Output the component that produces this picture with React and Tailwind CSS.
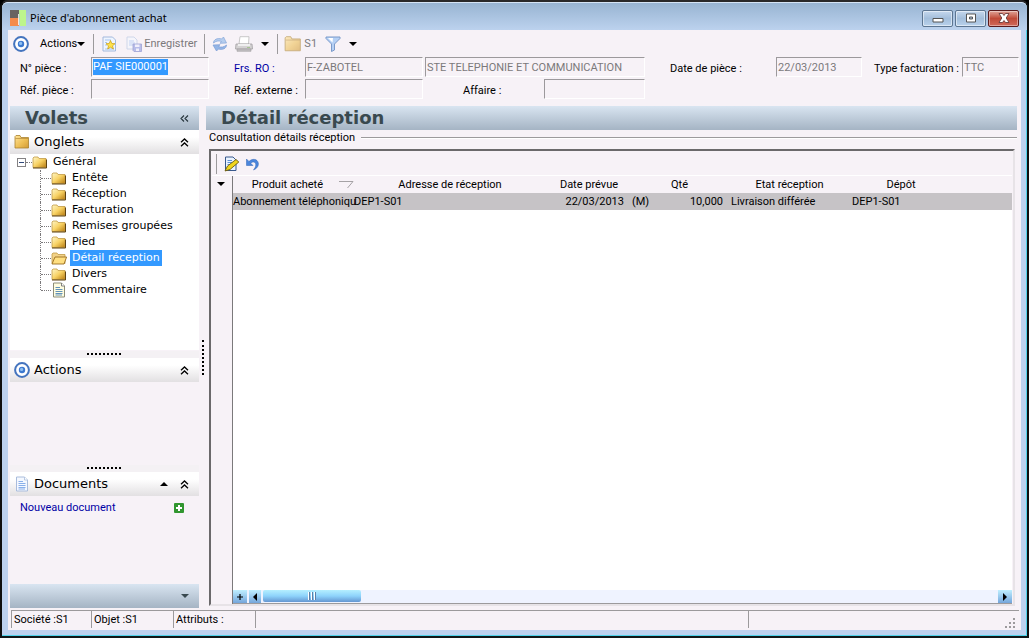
import React from "react";

const field =
  "h-5 shrink-0 border border-t-[#9c999c] border-l-[#9c999c] border-r-white border-b-white bg-[#f7f2f7] text-[#7b797b]";

function Target() {
  return (
    <svg viewBox="0 0 16 16" className="h-4 w-4 shrink-0">
      <circle cx="8" cy="8" r="6.9" fill="#fff" stroke="#4474be" strokeWidth="2" />
      <circle cx="8" cy="8" r="3.2" fill="#3c78cf" />
      <circle cx="7.600" cy="7.400" r="1.600" fill="#8fc0f2" />
    </svg>
  );
}

function Folder({ pale = false }) {
  return (
    <svg viewBox="0 0 16 16" className={pale ? "h-[18px] w-[18px] shrink-0 opacity-60" : "h-4 w-4 shrink-0"}>
      <defs>
        <linearGradient id="fold" x1="0" y1="0" x2="1" y2="1">
          <stop offset="0" stopColor="#ffe49a" />
          <stop offset="0.55" stopColor="#eebf55" />
          <stop offset="1" stopColor="#d29a35" />
        </linearGradient>
      </defs>
      <path d="M1 14V2.500L2 1.500H6L7 3.500H14.500V14Z" fill="url(#fold)" stroke="#a9822f" strokeWidth="0.8" />
      <path d="M1.500 4.500H14.200" fill="none" stroke="#a87e30" strokeWidth="0.6" />
    </svg>
  );
}

function TreeFolder({ open = false }) {
  return (
    <svg viewBox="0 0 16 13" className="h-[13px] w-4 shrink-0">
      <defs>
        <linearGradient id="tfold" x1="0" y1="0" x2="1" y2="1">
          <stop offset="0" stopColor="#fff7c8" />
          <stop offset="0.5" stopColor="#f8d264" />
          <stop offset="1" stopColor="#b87c10" />
        </linearGradient>
      </defs>
      <path d="M1 11.500V2L2 1H6L7 2.500H14V11.500Z" fill={open ? "#f2d287" : "url(#tfold)"} stroke="#c29a45" strokeWidth="0.8" />
      {open ? (
        <path d="M1 12L4 5H15.600L13 12Z" fill="#ffdf80" stroke="#9a6d20" strokeWidth="0.9" />
      ) : (
        <path d="M1 12H14.500V3.500" fill="none" stroke="#5f4311" strokeWidth="1" />
      )}
    </svg>
  );
}

function Page({ yellow = false }) {
  return (
    <svg viewBox="0 0 16 16" className="h-4 w-4 shrink-0">
      <path d="M2.500 1H10.500L13.500 4V15H2.500Z" fill={yellow ? "#fffde0" : "#f4f8ff"} stroke={yellow ? "#8c8c78" : "#a9bcdc"} />
      <path d="M10.500 1V4H13.500" fill="#fff" stroke={yellow ? "#666" : "#a9bcdc"} strokeWidth="0.8" />
      <path d="M4.500 5.500H9M4.500 7.500H11.500M4.500 9.500H11.500M4.500 11.500H11.500M4.500 13H11" stroke={yellow ? "#4f86b5" : "#7da7e8"} strokeWidth="0.9" />
    </svg>
  );
}

function Triangle({ up = false, color = "#000" }) {
  return (
    <svg viewBox="0 0 8 4" className="h-1 w-2 shrink-0">
      <path d={up ? "M0 4L4 0L8 4Z" : "M0 0H8L4 4Z"} fill={color} />
    </svg>
  );
}

function DoubleUp() {
  return (
    <svg viewBox="0 0 9 9" className="h-[9px] w-[9px]">
      <path d="M1 4.200L4.500 1L8 4.200M1 8.200L4.500 5L8 8.200" fill="none" stroke="#000" strokeWidth="1.300" />
    </svg>
  );
}

function Divider() {
  return <span className="h-5 w-px bg-[#9c9a9c]" />;
}

function Dots() {
  return (
    <div className="flex h-[7px] items-start justify-center bg-[#f4f1f4] pt-0.5">
      <svg viewBox="0 0 35 2" className="h-0.5 w-[35px]">
        <path d="M0 1H35" stroke="#000" strokeWidth="2" strokeDasharray="2 2" />
      </svg>
    </div>
  );
}

function SectionHead({ icon, title, extra }) {
  return (
    <div className="flex h-6 shrink-0 items-center bg-linear-to-b from-white from-30% to-[#e2e0e2] pl-1 pr-2.5">
      {icon}
      <h3 className="flex-1 pl-1 font-['DejaVu_Sans',sans-serif] text-[13px] leading-4">{title}</h3>
      {extra}
      <button aria-label={"Replier " + title} className="pl-3">
        <DoubleUp />
      </button>
    </div>
  );
}

function WindowButton({ label, close = false, children }) {
  return (
    <button
      aria-label={label}
      className={
        close
          ? "flex h-[17px] w-[31px] items-center justify-center rounded-xs border border-[#5a1a1c] bg-linear-to-b from-[#e0a398] via-[#c04a38] to-[#d0695a] inset-ring inset-ring-white/40"
          : "flex h-[17px] w-[31px] items-center justify-center rounded-xs border border-[#5c7591] bg-linear-to-b from-[#c5d8ed] via-[#a3bedb] to-[#b9d2ec] inset-ring inset-ring-white/50"
      }
    >
      <svg viewBox="0 0 14 12" className="h-3 w-3.5">
        {children}
      </svg>
    </button>
  );
}

function TitleBar() {
  return (
    <header className="flex h-7 shrink-0 items-center rounded-t-md border-t border-[#d5e4f5] bg-linear-to-b from-[#98b4d2] to-[#bcd2ee] pl-2 pr-2 pt-[3px]">
      <svg viewBox="0 0 16 16" className="h-4 w-4">
        <path d="M0 0H9V8H0Z" fill="#696361" />
        <path d="M0 8H9V16H0Z" fill="#f58a4b" />
        <path d="M9 0H16V16H10Z" fill="#bdf58c" />
        <path d="M8.500 4V15" stroke="#fff" strokeWidth="0.8" />
      </svg>
      <h1 className="flex-1 pl-1 font-['Noto_Sans',sans-serif] text-[11px] leading-4">Pièce d'abonnement achat</h1>
      <div className="flex gap-0.5">
        <WindowButton label="Réduire">
          <path d="M2 6.500H12V10H2Z" fill="#fff" stroke="#555" />
        </WindowButton>
        <WindowButton label="Agrandir">
          <path d="M2.500 2H11.500V10H2.500Z M5.500 5V7H8.500V5Z" fill="#fff" fillRule="evenodd" stroke="#555" />
        </WindowButton>
        <WindowButton label="Fermer" close>
          <path d="M2 1.500H5.500L7 3.500L8.500 1.500H12L9.200 6L12 10.500H8.500L7 8.500L5.500 10.500H2L4.800 6Z" fill="#fff" stroke="#5d3030" strokeWidth="0.8" />
        </WindowButton>
      </div>
    </header>
  );
}

function Toolbar() {
  return (
    <div className="flex h-[27px] shrink-0 items-center pl-[5px] text-[#7b797b]">
      <button aria-label="Cible"><Target /></button>
      <button className="ml-[11px] flex items-center text-black">
        Actions
        <Triangle />
      </button>
      <span className="mx-2 flex"><Divider /></span>
      <button aria-label="Nouveau">
        <svg viewBox="0 0 16 16" className="h-4 w-4">
          <path d="M1 1H10.500L13.500 4V15H1Z" fill="#eef5ff" stroke="#a3b9dc" />
          <path d="M3 4H9M3 13H12M3 6.500H5M3 9H5" stroke="#a6c3ec" />
          <path d="M8.500 4.500L9.800 7.500L13 7.700L10.500 9.800L11.400 13L8.500 11.200L5.700 13L6.500 9.800L4 7.700L7.200 7.500Z" fill="#ffe34a" stroke="#cfa51a" strokeWidth="0.8" />
        </svg>
      </button>
      <button className="ml-2 flex items-center gap-0.5">
        <svg viewBox="0 0 16 16" className="h-4 w-4 opacity-60">
          <path d="M1 1H8L11 4V13H1Z" fill="#f5f8ff" stroke="#b5c6e2" />
          <path d="M3 5H8M3 7H9M3 9H7" stroke="#9dbdf0" />
          <path d="M7 8H15.500V15.500H8L7 14.500Z" fill="#8f9be0" stroke="#6670bd" strokeWidth="0.8" />
          <path d="M9 8.500H13.500V11H9ZM10 12.500H13V15H10Z" fill="#eef" />
        </svg>
        Enregistrer
      </button>
      <span className="mx-[7px] flex"><Divider /></span>
      <button aria-label="Actualiser">
        <svg viewBox="0 0 16 16" className="h-4 w-4">
          <path d="M1.500 7C1.500 3.500 5.500 1.700 9.500 3L11.500 1L14.500 7L8 7.300L9.500 5.500C6.500 4.300 4 5 1.500 7Z" fill="#b5cdee" stroke="#84a5d8" strokeWidth="0.7" />
          <path d="M14.500 9C14.500 12.500 10.500 14.300 6.500 13L4.500 15L1 9L8 8.700L6.500 10.500C9.500 11.700 12 11 14.500 9Z" fill="#93b5e6" stroke="#7c9cd4" strokeWidth="0.7" />
        </svg>
      </button>
      <button aria-label="Imprimer" className="ml-[7px] flex items-center gap-2">
        <svg viewBox="0 0 18 16" className="h-4 w-[18px]">
          <path d="M4 8L5 0.700H14L13.500 8Z" fill="#fff" stroke="#bbb" strokeWidth="0.8" />
          <path d="M1 8H17L17.500 13H0.500Z" fill="#d4d2d3" stroke="#a2a0a2" strokeWidth="0.8" />
          <path d="M3 8H15V10H3Z" fill="#efefef" />
          <path d="M2 13H16V15.300H2Z" fill="#bfbdbf" stroke="#a2a0a2" strokeWidth="0.6" />
          <path d="M12 11.500H15" stroke="#a5c492" />
        </svg>
        <Triangle />
      </button>
      <span className="mr-1.5 ml-2 flex"><Divider /></span>
      <button className="flex items-center gap-0.5">
        <Folder pale />
        S1
      </button>
      <button aria-label="Filtrer" className="ml-2 flex items-center gap-2">
        <svg viewBox="0 0 16 16" className="h-4 w-4">
          <path d="M1 1H15V2.500L9.500 8V14L6.500 15.500V8L1 2.500Z" fill="#b5d0f5" stroke="#7b9ac9" />
          <path d="M3 2H8L7.500 6.500Z" fill="#fff" />
        </svg>
        <Triangle />
      </button>
    </div>
  );
}

function Field({ id, label, value = "", w, link = false, lw }) {
  return (
    <div className="flex shrink-0 items-center">
      <label htmlFor={id} className={"shrink-0 pt-1 whitespace-nowrap " + lw + (link ? " text-[#0000a5]" : "")}>{label}</label>
      <input id={id} readOnly defaultValue={value} className={field + " px-px " + w} />
    </div>
  );
}

function HeaderForm() {
  return (
    <form className="flex h-[49px] shrink-0 overflow-hidden pl-3">
      <div className="mr-[25px] flex flex-col gap-0.5">
        <div className="flex items-center">
          <label htmlFor="num" className="w-[71px] pt-1">N° pièce :</label>
          <div className={field + " flex w-[118px] items-center px-px"}>
            <input id="num" readOnly defaultValue="PAF SIE000001" className="h-4 bg-[#3399ff] text-white field-sizing-content" />
          </div>
        </div>
        <Field id="ref" label="Réf. pièce :" lw="w-[71px]" w="w-[118px]" />
      </div>
      <div className="mr-[25px] flex flex-col gap-0.5">
        <div className="flex gap-0.5">
          <Field id="frs" label="Frs. RO :" value="F-ZABOTEL" link lw="w-[71px]" w="w-[118px]" />
          <input aria-label="Nom du fournisseur" readOnly defaultValue="STE TELEPHONIE ET COMMUNICATION" className={field + " w-[220px] px-px"} />
        </div>
        <div className="flex justify-between">
          <Field id="ext" label="Réf. externe :" lw="w-[71px]" w="w-[118px]" />
          <Field id="aff" label="Affaire :" lw="w-[81px]" w="w-[101px]" />
        </div>
      </div>
      <div className="flex flex-1 items-start gap-3">
        <Field id="date" label="Date de pièce :" value="22/03/2013" lw="w-[106px]" w="w-[86px]" />
        <Field id="type" label="Type facturation :" value="TTC" lw="w-[88px]" w="w-[57px]" />
      </div>
    </form>
  );
}

const tabs = ["Entête", "Réception", "Facturation", "Remises groupées", "Pied", "Détail réception", "Divers", "Commentaire"];

function Tree() {
  return (
    <div className="h-[196px] shrink-0 bg-white pl-[7px] font-['DejaVu_Sans',sans-serif] text-[11px]">
      <div className="flex h-4 items-center">
        <button aria-label="Réduire Général" className="flex h-[9px] w-[9px] items-center justify-center border border-[#848284] bg-white">
          <span className="h-px w-[5px] bg-[#31497b]" />
        </button>
        <span className="w-1.5 border-t border-dotted border-[#7b797b]" />
        <TreeFolder />
        <span className="pl-[5px]">Général</span>
      </div>
      <ul className="pl-[23px]">
        {tabs.map((t, i) => (
          <li key={t} className="flex h-4">
            <span className={"border-l border-dotted border-[#7b797b] " + (i === tabs.length - 1 ? "h-2" : "h-4")} />
            <span className="mt-2 w-2.5 border-t border-dotted border-[#7b797b]" />
            <span className="flex w-[19px] items-center">
              {i === 7 ? <Page yellow /> : <TreeFolder open={i === 5} />}
            </span>
            <button className={"px-0.5 leading-4 " + (i === 5 ? "bg-[#3399ff] text-white" : "")}>{t}</button>
          </li>
        ))}
      </ul>
    </div>
  );
}

const heading = "font-['DejaVu_Sans',sans-serif] text-[18px] leading-6 font-bold text-[#39494f]";
const banner = "bg-linear-to-b from-[#d9e5f1] to-[#a5b4c4]";

function Sidebar() {
  return (
    <aside className="flex w-[189px] shrink-0 flex-col">
      <div className={"flex h-6 shrink-0 items-center justify-between pl-[15px] pr-2.5 " + banner}>
        <h2 className={heading}>Volets</h2>
        <button aria-label="Replier les volets">
          <svg viewBox="0 0 9 7" className="h-[7px] w-[9px]">
            <path d="M4 0.500L1 3.500L4 6.500M8 0.500L5 3.500L8 6.500" fill="none" stroke="#26343b" strokeWidth="1.100" />
          </svg>
        </button>
      </div>
      <SectionHead icon={<Folder />} title="Onglets" />
      <Tree />
      <div className="h-px" />
      <Dots />
      <SectionHead icon={<Target />} title="Actions" />
      <div className="h-[83px]" />
      <Dots />
      <SectionHead icon={<Page />} title="Documents" extra={<button aria-label="Monter"><Triangle up /></button>} />
      <div className="flex h-6 items-center justify-between pl-2.5 pr-[15px]">
        <a href="#nouveau" className="text-[#0000a5]">Nouveau document</a>
        <button aria-label="Ajouter un document">
          <svg viewBox="0 0 10 10" className="h-2.5 w-2.5">
            <rect width="10" height="10" rx="1" fill="#31962f" />
            <path d="M5 2V8M2 5H8" stroke="#fff" strokeWidth="2" />
          </svg>
        </button>
      </div>
      <div className={"mt-auto flex h-6 shrink-0 items-center justify-end pr-2.5 " + banner}>
        <button aria-label="Plus de volets"><Triangle color="#39494f" /></button>
      </div>
    </aside>
  );
}

function Grid() {
  return (
    <div className="mt-1 mr-0.5 mb-0.5 ml-[3px] flex flex-1 flex-col border-2 border-t-[#6b696b] border-l-[#6b696b] border-r-[#e7e3e7] border-b-[#e7e3e7] p-px pb-0">
      <div className="flex h-6 shrink-0 items-center border-b border-white pl-1">
        <Divider />
        <button aria-label="Modifier" className="ml-[7px]">
          <svg viewBox="0 0 16 16" className="h-4 w-4">
            <path d="M1.500 1H9L12 4V14.500H1.500Z" fill="#e9f3ff" stroke="#39598c" />
            <path d="M3.500 4.500H8M3.500 6.500H10M3.500 8.500H8M3.500 10.500H6" stroke="#5b8fd4" />
            <path d="M1 15L3.500 10L12 3.500L14.800 6L6 13.500Z" fill="#f0d51c" stroke="#6b5b10" strokeWidth="0.9" />
          </svg>
        </button>
        <button aria-label="Annuler" className="ml-1.5">
          <svg viewBox="0 0 14 14" className="h-3.5 w-3.5">
            <path d="M0.500 2V8.500H7L4.700 6.200C7 4 10 5 9.800 8C9.700 10 8.500 11.500 7.500 13C11 11.500 12.800 9 12.300 6C11.500 2 6.500 1 3 4.500Z" fill="#4a86dc" stroke="#2f62b5" strokeWidth="0.5" />
          </svg>
        </button>
      </div>
      <div className="flex min-h-0 flex-1">
        <div className="w-[21px] shrink-0 border-r border-[#7b797b] pt-1.5">
          <button aria-label="Options" className="flex pl-[5px]"><Triangle /></button>
        </div>
        <div className="flex min-w-0 flex-1 flex-col bg-white">
          <table className="w-full table-fixed border-collapse">
            <colgroup>
              <col className="w-[121px]" />
              <col className="w-[192px]" />
              <col className="w-[86px]" />
              <col className="w-5" />
              <col className="w-[75px]" />
              <col className="w-[121px]" />
              <col className="w-[106px]" />
              <col />
            </colgroup>
            <thead>
              <tr className="h-[17px] bg-[#f7f2f7] leading-4 [&>th]:p-0 [&>th]:font-normal">
                <th>
                  <span className="flex items-center justify-end gap-4">
                    Produit acheté
                    <svg viewBox="0 0 15 8" className="h-2 w-[15px]">
                      <path d="M0 0.500H14L8.500 7" fill="none" stroke="#a5a2a5" />
                    </svg>
                  </span>
                </th>
                <th>Adresse de réception</th>
                <th>Date prévue</th>
                <th colSpan={2}>Qté</th>
                <th><span className="pl-1">Etat réception</span></th>
                <th>Dépôt</th>
                <th aria-label="Autre" />
              </tr>
            </thead>
            <tbody>
              <tr className="h-[17px] bg-[#c6c3c6] leading-4 [&>td]:whitespace-nowrap [&>td]:px-0 [&>td]:py-0">
                <td>Abonnement téléphoniqu</td>
                <td>DEP1-S01</td>
                <td><div className="pr-2 text-right">22/03/2013</div></td>
                <td>(M)</td>
                <td><div className="pr-1 text-right">10,000</div></td>
                <td><div className="pl-1">Livraison différée</div></td>
                <td><div className="pl-1">DEP1-S01</div></td>
                <td />
              </tr>
            </tbody>
          </table>
          <div className="mt-auto flex h-3.5 items-stretch gap-0.5 border-b border-[#9c9a9c] bg-[#eff3ff]">
            <button aria-label="Ajouter" className="flex w-3.5 items-center justify-center bg-linear-to-b from-[#bfefff] to-[#75a6db]">
              <svg viewBox="0 0 8 8" className="h-2 w-2"><path d="M4 1V7M1 4H7" stroke="#000" strokeWidth="1.200" /></svg>
            </button>
            <button aria-label="Gauche" className="flex w-3 items-center justify-center bg-linear-to-b from-[#bfefff] to-[#75a6db]">
              <svg viewBox="0 0 4 8" className="h-2 w-1"><path d="M4 0V8L0 4Z" /></svg>
            </button>
            <div className="flex-1">
              <div className="flex h-3 w-[98px] items-center justify-center gap-px rounded-xs bg-linear-to-b from-[#b5efff] via-[#8ed3fb] to-[#6596d1]">
                <span className="h-2 w-0.5 border-l border-white bg-[#5c7fa8]" />
                <span className="h-2 w-0.5 border-l border-white bg-[#5c7fa8]" />
                <span className="h-2 w-0.5 border-l border-white bg-[#5c7fa8]" />
              </div>
            </div>
            <button aria-label="Droite" className="flex w-3.5 items-center justify-center bg-linear-to-b from-[#bfefff] to-[#75a6db]">
              <svg viewBox="0 0 4 8" className="h-2 w-1"><path d="M0 0V8L4 4Z" /></svg>
            </button>
          </div>
        </div>
      </div>
    </div>
  );
}

const cell = "h-[17px] border-l border-[#9c9a9c] pl-0.5 pt-px";

export default function App() {
  return (
    <div className="min-h-screen bg-black">
      <div className="flex min-h-screen flex-col rounded-t-lg border-2 border-t-[#292829] border-l-[#101010] border-r-[#101010] border-b-[#101818] bg-[#bdd2ef] font-['Roboto',sans-serif] text-[11px] leading-4 text-black shadow-[inset_-1px_-1px_0_#4fd3ea]">
        <TitleBar />
        <div className="mx-1.5 mb-1.5 flex flex-1 flex-col bg-[#f7f2f7]">
          <Toolbar />
          <HeaderForm />
          <div className="flex flex-1 pl-0.5 pr-1">
            <Sidebar />
            <div className="flex w-[7px] shrink-0 justify-center pt-[234px]">
              <span className="h-[35px] border-l-2 border-dotted border-black" />
            </div>
            <main className="flex min-w-0 flex-1 flex-col">
              <div className={"h-6 shrink-0 pl-[15px] " + banner}>
                <h2 className={heading}>Détail réception</h2>
              </div>
              <div className="flex h-[15px] shrink-0 items-center gap-1.5 pl-[3px]">
                <span>Consultation détails réception</span>
                <span className="h-0.5 flex-1 border-t border-[#9c9a9c] bg-white" />
              </div>
              <Grid />
            </main>
          </div>
          <footer className="mt-0.5 mr-0.5 mb-0.5 ml-[3px] flex border-t border-[#9c9a9c]">
            <span className={cell + " w-20"}>Société :S1</span>
            <span className={cell + " w-[82px]"}>Objet :S1</span>
            <span className={cell + " w-[82px]"}>Attributs :</span>
            <span className={cell + " flex-13"} />
            <span className={cell + " flex flex-7 items-end justify-end pr-1"}>
              <svg viewBox="0 0 10 10" className="h-2.5 w-2.5">
                <path d="M8 0h2v2H8zM4 4h2v2H4zM8 4h2v2H8zM0 8h2v2H0zM4 8h2v2H4zM8 8h2v2H8z" fill="#9c9a9c" />
              </svg>
            </span>
          </footer>
        </div>
      </div>
    </div>
  );
}
